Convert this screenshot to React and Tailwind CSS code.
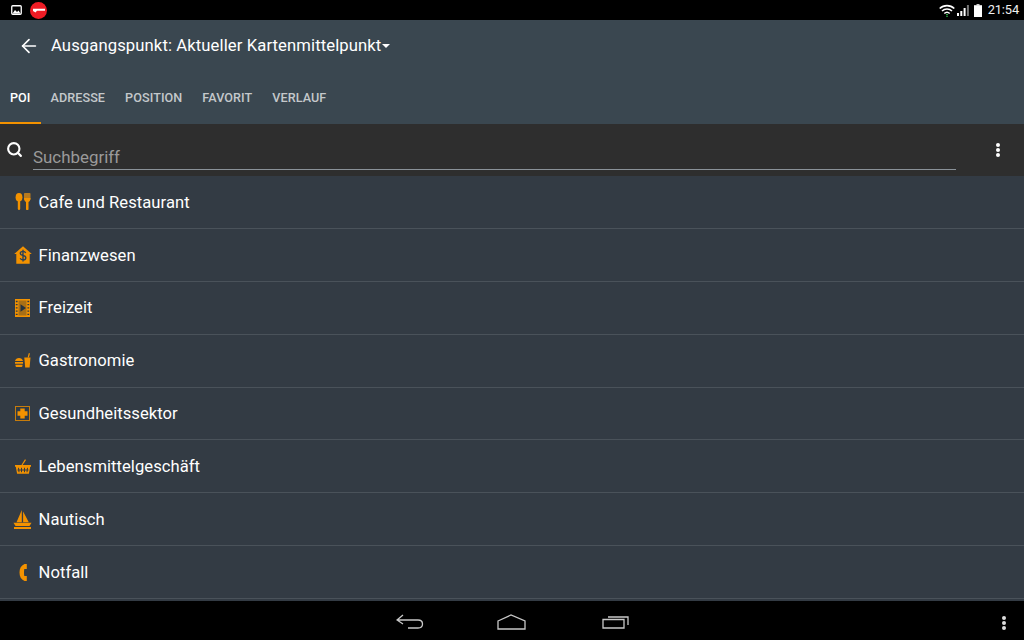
import { ArrowLeft, Search } from 'lucide-react';

const O = '#f39200';

const icons = {
  cafe: (
    <svg width="16" height="17" viewBox="0 0 16 17">
      <ellipse cx="4" cy="4.300" rx="3.400" ry="4.300" fill={O} />
      <rect x="2.800" y="7.500" width="2.400" height="9.500" rx="1.200" fill={O} />
      <rect x="9" y="0" width="6.500" height="7" rx="0.800" fill="#b87a1e" />
      <path d="M9 5h6.500c0 2.300-1 3.500-2 4v7a1.250 1.250 0 0 1-2.500 0V9c-1-.5-2-1.700-2-4z" fill={O} />
    </svg>
  ),
  finance: (
    <svg width="18" height="18" viewBox="0 0 18 18">
      <path d="M9 .2 17.800 8H15.700v9.800H2.300V8H.2z" fill={O} />
      <path d="M11.700 7C11.200 5.900 10.100 5.400 9 5.400 7.500 5.400 6.300 6.100 6.300 7.400S7.600 9.200 9 9.500s2.800.8 2.800 2.200-1.300 2.200-2.800 2.200c-1.200 0-2.300-.6-2.800-1.600M9 3.800v11.600" fill="none" stroke="#2c4257" strokeWidth="1.400" />
    </svg>
  ),
  leisure: (
    <svg width="15" height="18" viewBox="0 0 15 18">
      <rect width="15" height="18" fill={O} />
      <rect x="3.500" y="1.500" width="8" height="15" fill="#a86f16" />
      <path d="M5.500 5.300v7.400L11 9z" fill="#26323e" />
      <path d="M.8 2.500h1.800M.8 5.700h1.800M.8 8.900h1.800M.8 12.100h1.800M.8 15.300h1.800M12.400 2.500h1.800M12.400 5.700h1.800M12.400 8.900h1.800M12.400 12.100h1.800M12.400 15.300h1.800" stroke="#2c3a48" strokeWidth="1.300" />
    </svg>
  ),
  food: (
    <svg width="16" height="15" viewBox="0 0 16 15">
      <path d="M0 8c.5-2 2-3 4-3s3.500 1 4 3zM0 9h8v1.700H0zM.5 11.700h7v1c0 .8-.6 1.300-1.300 1.300H1.800C1.100 14 .5 13.500.5 12.700z" fill={O} />
      <path d="M9.300 4.500h6.200l-.9 10h-4.400z" fill={O} />
      <path d="M12.600 4.500 13.700 .2h1.300l-1.100 4.300z" fill={O} />
    </svg>
  ),
  health: (
    <svg width="15" height="15" viewBox="0 0 15 15">
      <rect x="0.500" y="0.500" width="14" height="14" fill="#2f3b47" stroke="#c77c0c" />
      <path d="M5.300 2.500h4.400v2.800h2.800v4.400H9.700v2.800H5.300V9.700H2.500V5.300h2.800z" fill={O} />
    </svg>
  ),
  grocery: (
    <svg width="16" height="15" viewBox="0 0 16 15">
      <path d="M0 6h16v1.800h-.8l-1.300 7H2.100l-1.300-7H0z" fill={O} />
      <path d="M3.500 8.800 4 13.200M6.500 8.800v4.400M9.500 8.800v4.400M12.500 8.800 12 13.200M2.500 11h11" stroke="#333b44" strokeWidth="1" />
      <path d="M7 6 10.500 .6" stroke={O} strokeWidth="1.200" />
    </svg>
  ),
  nautical: (
    <svg width="19" height="19" viewBox="0 0 19 19">
      <path d="M8.800 0 3.500 12.200h5.300zM10.100 1.500 15.800 12.200h-5.700z" fill={O} />
      <path d="M.5 12.800h18l-2 3.200H2.500z" fill={O} />
      <path d="M1 17h17v2H1z" fill={O} />
    </svg>
  ),
  emergency: (
    <svg width="8" height="17" viewBox="0 0 8 17">
      <path d="M7.800 0v5H5.300c-.4 2-.4 5 0 7h2.500v5H5.500C2 15.500.5 12.500.5 8.500S2 1.500 5.500 0z" fill={O} />
    </svg>
  ),
};

const rows = [
  { icon: icons.cafe, label: 'Cafe und Restaurant' },
  { icon: icons.finance, label: 'Finanzwesen' },
  { icon: icons.leisure, label: 'Freizeit' },
  { icon: icons.food, label: 'Gastronomie' },
  { icon: icons.health, label: 'Gesundheitssektor' },
  { icon: icons.grocery, label: 'Lebensmittelgeschäft' },
  { icon: icons.nautical, label: 'Nautisch' },
  { icon: icons.emergency, label: 'Notfall' },
];

const tabs = ['POI', 'ADRESSE', 'POSITION', 'FAVORIT', 'VERLAUF'];

function Dots({ color }) {
  return (
    <div className="flex flex-col gap-[1px]">
      {[0, 1, 2].map((i) => (
        <div key={i} className={`w-[4px] h-[4px] rounded-full ${color}`} />
      ))}
    </div>
  );
}

export default function App() {
  return (
    <div className="w-[1024px] h-[640px] overflow-hidden flex flex-col bg-black font-['Roboto',sans-serif] text-white">
      {/* status bar */}
      <div className="h-[20px] shrink-0 bg-black flex items-center pl-[11px] pr-[5px]">
        <svg width="11" height="10" viewBox="0 0 11 10">
          <rect x="0.750" y="0.750" width="9.500" height="8.500" rx="1" fill="none" stroke="#fff" strokeWidth="1.300" />
          <path d="M1.500 8.500 4 5l2 2 1.500-1.500 2 3z" fill="#fff" />
        </svg>
        <div className="ml-[8px] w-[17px] h-[17px] rounded-full bg-[#ee1c25] flex items-center justify-center">
          <svg width="12" height="5" viewBox="0 0 12 5">
            <path d="M0 .8h12v2H4L2.500 4.500 0 3z" fill="#fff" />
          </svg>
        </div>
        <div className="ml-auto flex items-center">
          <svg width="16" height="13" viewBox="0 0 16 13" fill="none" stroke="#fff" strokeWidth="1.600">
            <path d="M.7 4.500C4.700.7 11.300.7 15.300 4.500M3 7c2.800-2.600 7.200-2.600 10 0M5.300 9.500C6.900 8 9.100 8 10.700 9.500" />
            <path d="M8 10v3" stroke="#35d04f" strokeDasharray="1 .8" />
          </svg>
          <svg className="ml-[2px]" width="12" height="11" viewBox="0 0 12 11">
            <rect x="0" y="8" width="2" height="3" fill="#fff" />
            <rect x="3.300" y="6" width="2" height="5" fill="#fff" />
            <rect x="6.600" y="3" width="2" height="8" fill="#fff" />
            <rect x="9.900" y="0" width="2" height="11" fill="#777" />
          </svg>
          <svg className="ml-[5px]" width="8" height="13" viewBox="0 0 8 13">
            <rect x="2.500" y="0" width="3" height="1.500" fill="#ccc" />
            <rect x="0" y="1.200" width="8" height="11.800" fill="#fff" />
          </svg>
          <span className="ml-[6px] text-[12.800px] leading-none tracking-[-0.1px] text-[#f0f0f0]">21:54</span>
        </div>
      </div>

      {/* toolbar */}
      <div className="h-[104px] shrink-0 bg-[#3a4750] flex flex-col">
        <div className="h-[52px] flex items-center pl-[18px]">
          <ArrowLeft size={22} strokeWidth={1.800} color="#fff" />
          <span className="ml-[11px] text-[16.650px] leading-none tracking-[0.1px]">Ausgangspunkt: Aktueller Kartenmittelpunkt</span>
          <div className="ml-[1px] w-0 h-0 border-x-[4px] border-x-transparent border-t-[4px] border-t-white" />
        </div>
        <div className="flex-1 flex">
          {tabs.map((t, i) => (
            <div
              key={t}
              className={`h-full flex items-center px-[10px] pt-[2px] text-[12.600px] tracking-[0.08px] font-medium border-b-2 ${i === 0 ? 'text-white border-[#f39200]' : 'text-[#c4c8cb] border-transparent'}`}
            >
              {t}
            </div>
          ))}
        </div>
      </div>

      {/* search */}
      <div className="h-[52px] shrink-0 bg-[#2e2e2e] flex pl-[6px] pr-[24px]">
        <Search size={17} strokeWidth={3} color="#fff" className="mt-[17px]" />
        <div className="ml-[10px] w-[923px] h-[46px] border-b border-[#8a9299] flex items-end pb-[1px] text-[16.900px] leading-[22px] text-[#9a9a9a]">
          Suchbegriff
        </div>
        <div className="ml-auto mt-[19px]">
          <Dots color="bg-white" />
        </div>
      </div>

      {/* list */}
      <div className="h-[425px] shrink-0 bg-[#333b44] flex flex-col">
        {rows.map((r) => (
          <div key={r.label} className="h-[52.900px] shrink-0 flex items-center border-b border-[#4a525a]">
            <div className="w-[38.500px] pl-[7px] flex items-center justify-center">{r.icon}</div>
            <span className="pt-[2px] text-[16.600px] leading-none tracking-[0.05px]">{r.label}</span>
          </div>
        ))}
      </div>

      {/* nav bar */}
      <div className="flex-1 bg-black flex items-center justify-center pt-[2px] pl-[4px] relative">
        <svg width="28" height="16" viewBox="0 0 28 16" fill="none" stroke="#c8c8c8" strokeWidth="1.300" className="ml-[-2px]">
          <path d="M7 1 1 6l6 4M1 6h21c6 0 6 8 0 8H12" />
        </svg>
        <svg width="30" height="16" viewBox="0 0 30 16" fill="none" stroke="#c8c8c8" strokeWidth="1.300" className="ml-[73px]">
          <path d="M1 7 14 1l14 6v8H1z" />
        </svg>
        <svg width="28" height="16" viewBox="0 0 28 16" fill="none" stroke="#c8c8c8" strokeWidth="1.300" className="ml-[75px]">
          <path d="M1 5.500h21V14H1zM6 3h20v8" />
        </svg>
        <div className="absolute right-[18px] top-[15px]">
          <Dots color="bg-[#dcdcdc]" />
        </div>
      </div>
    </div>
  );
}
